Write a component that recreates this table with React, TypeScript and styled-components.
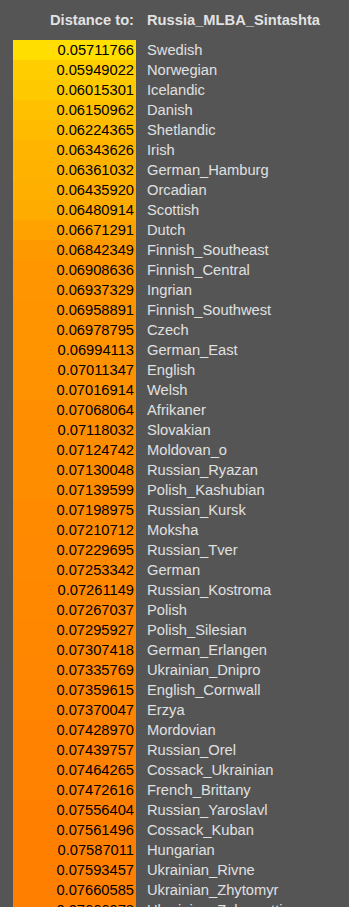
import React from 'react'
import styled, { createGlobalStyle } from 'styled-components'

const GlobalStyle = createGlobalStyle`
  html, body {
    margin: 0;
    padding: 0;
    background: #555555;
  }
  body {
    font-family: "Liberation Sans", Arial, sans-serif;
    overflow: hidden;
  }
`

const Page = styled.div`
  padding-left: 13px;
  width: 349px;
  height: 907px;
  box-sizing: border-box;
  overflow: hidden;
`

const Table = styled.div`
  display: grid;
  grid-template-columns: 123px 1fr;
  font-size: 14.7px;
`

const HeaderCell = styled.div<{ $right?: boolean }>`
  height: 40px;
  display: flex;
  align-items: center;
  justify-content: ${p => (p.$right ? 'flex-end' : 'flex-start')};
  padding: ${p => (p.$right ? '0 2px 0 0' : '0 0 0 11px')};
  color: #e2e2e2;
  font-weight: bold;
`

const ValueCell = styled.div`
  height: 20px;
  line-height: 20px;
  text-align: right;
  padding-right: 2px;
  color: #000;
`

const NameCell = styled.div`
  height: 20px;
  line-height: 20px;
  padding-left: 11px;
  color: #e0e0e0;
  white-space: nowrap;
`

const rows: [string, string][] = [
  ['0.05711766', 'Swedish'],
  ['0.05949022', 'Norwegian'],
  ['0.06015301', 'Icelandic'],
  ['0.06150962', 'Danish'],
  ['0.06224365', 'Shetlandic'],
  ['0.06343626', 'Irish'],
  ['0.06361032', 'German_Hamburg'],
  ['0.06435920', 'Orcadian'],
  ['0.06480914', 'Scottish'],
  ['0.06671291', 'Dutch'],
  ['0.06842349', 'Finnish_Southeast'],
  ['0.06908636', 'Finnish_Central'],
  ['0.06937329', 'Ingrian'],
  ['0.06958891', 'Finnish_Southwest'],
  ['0.06978795', 'Czech'],
  ['0.06994113', 'German_East'],
  ['0.07011347', 'English'],
  ['0.07016914', 'Welsh'],
  ['0.07068064', 'Afrikaner'],
  ['0.07118032', 'Slovakian'],
  ['0.07124742', 'Moldovan_o'],
  ['0.07130048', 'Russian_Ryazan'],
  ['0.07139599', 'Polish_Kashubian'],
  ['0.07198975', 'Russian_Kursk'],
  ['0.07210712', 'Moksha'],
  ['0.07229695', 'Russian_Tver'],
  ['0.07253342', 'German'],
  ['0.07261149', 'Russian_Kostroma'],
  ['0.07267037', 'Polish'],
  ['0.07295927', 'Polish_Silesian'],
  ['0.07307418', 'German_Erlangen'],
  ['0.07335769', 'Ukrainian_Dnipro'],
  ['0.07359615', 'English_Cornwall'],
  ['0.07370047', 'Erzya'],
  ['0.07428970', 'Mordovian'],
  ['0.07439757', 'Russian_Orel'],
  ['0.07464265', 'Cossack_Ukrainian'],
  ['0.07472616', 'French_Brittany'],
  ['0.07556404', 'Russian_Yaroslavl'],
  ['0.07561496', 'Cossack_Kuban'],
  ['0.07587011', 'Hungarian'],
  ['0.07593457', 'Ukrainian_Rivne'],
  ['0.07660585', 'Ukrainian_Zhytomyr'],
  ['0.07666978', 'Ukrainian_Zakarpattia'],
]

// yellow at the closest, orange further away
function shade(v: number) {
  const lo = 0.0571, hi = 0.0768
  const t = Math.max(0, Math.min(1, (hi - v) / (hi - lo)))
  const g = Math.round(127 + 95 * Math.pow(t, 1.5))
  return `rgb(255, ${g}, 0)`
}

export default function App() {
  return (
    <Page>
      <GlobalStyle />
      <Table>
        <HeaderCell $right>Distance to:</HeaderCell>
        <HeaderCell>Russia_MLBA_Sintashta</HeaderCell>
        {rows.map(([val, name]) => (
          <React.Fragment key={name}>
            <ValueCell style={{ background: shade(parseFloat(val)) }}>{val}</ValueCell>
            <NameCell>{name}</NameCell>
          </React.Fragment>
        ))}
      </Table>
    </Page>
  )
}
